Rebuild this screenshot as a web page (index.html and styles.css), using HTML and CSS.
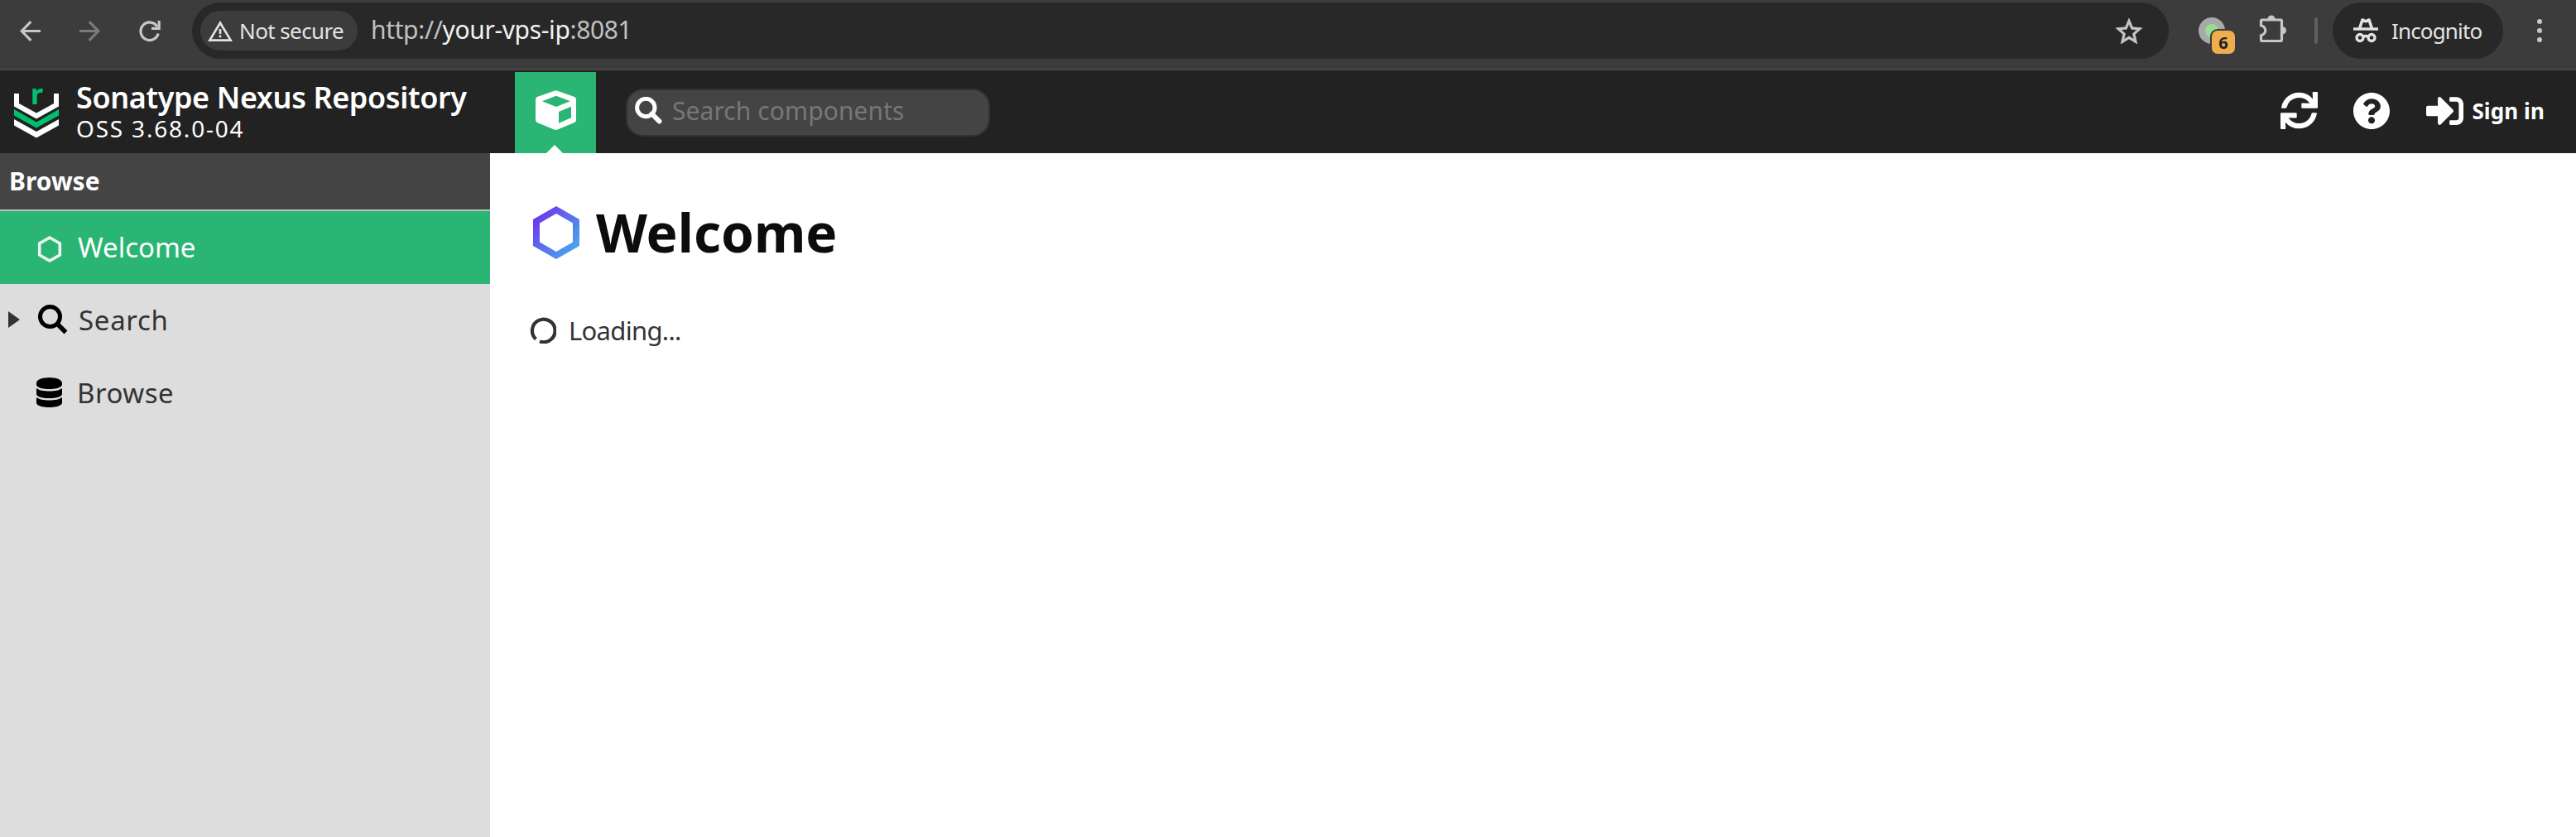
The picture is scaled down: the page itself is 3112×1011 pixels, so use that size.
FILE: index.html
```html
<!DOCTYPE html>
<html lang="en">
<head>
<meta charset="utf-8">
<title>Sonatype Nexus Repository</title>
<link rel="stylesheet" href="styles.css">
</head>
<body>
<div class="browser-bar">
  <nav class="nav-buttons">
    <svg class="nav-icon" width="25" height="25" viewBox="0 0 25 25" fill="none" stroke="#c7c7c7" stroke-width="3.2"><path d="M25 12.500H2.500M13.300 1.200L2.200 12.500l11.100 11.300"/></svg>
    <svg class="nav-icon" width="25" height="25" viewBox="0 0 25 25" fill="none" stroke="#7b7b7b" stroke-width="3.2"><path d="M0 12.500h22.500M11.700 1.200l11.100 11.300-11.100 11.300"/></svg>
    <svg class="nav-icon" width="26" height="26" viewBox="0 0 26 26" fill="none" stroke="#c7c7c7" stroke-width="3.200"><path d="M23.200 15.500A10.800 10.800 0 1 1 22 7.200"/><path d="M24.200 0v9.300H15"/></svg>
  </nav>
  <div class="omnibox">
    <div class="security-chip">
      <svg width="30" height="25" viewBox="0 0 30 25"><path d="M15 0l15 25H0zM15 5.200L4.700 22.200h20.600z" fill="#e3e3e3" fill-rule="evenodd"/><path d="M13.700 10h2.600v6h-2.600zM13.700 17.600h2.600v2.600h-2.600z" fill="#e3e3e3"/></svg>
      <span class="security-text">Not secure</span>
    </div>
    <div class="url">http://<span class="url-host">your-vps-ip</span>:8081</div>
    <svg class="star" width="32" height="31" viewBox="2 2 20 19" preserveAspectRatio="none"><path fill="#c7c7c7" stroke="#c7c7c7" stroke-width=".4" d="M22 9.240l-7.190-.62L12 2 9.190 8.630 2 9.240l5.460 4.730L5.820 21 12 17.270 18.180 21l-1.630-7.030L22 9.240zM12 15.400l-3.760 2.270 1-4.280-3.320-2.880 4.380-.38L12 6.100l1.710 4.040 4.380.38-3.320 2.880 1 4.280L12 15.400z"/></svg>
  </div>
  <div class="extension">
    <span class="extension-badge">6</span>
  </div>
  <svg class="puzzle" width="34" height="34" viewBox="0 0 34 34"><path d="M4 6h22a1.500 1.500 0 0 1 1.500 1.500V30a1.500 1.500 0 0 1-1.500 1.500H4A1.500 1.500 0 0 1 2.500 30v-5.200c7-2.500 7-9.600 0-12V7.500A1.500 1.500 0 0 1 4 6z" fill="none" stroke="#c7c7c7" stroke-width="3.200"/><path d="M10.500 5a4.500 4.500 0 0 1 9 0zM28.500 14.200a4.500 4.500 0 0 1 0 9z" fill="#c7c7c7"/></svg>
  <span class="bar-separator"></span>
  <div class="incognito">
    <svg width="30" height="30" viewBox="0 0 30 30"><path d="M0 11.300h30v3.400H0z" fill="#e3e3e3"/><path d="M7.700 12L11 2l4 1.800L19 2l3.300 10" fill="none" stroke="#e3e3e3" stroke-width="3.600" stroke-linejoin="round"/><g fill="none" stroke="#e3e3e3" stroke-width="3.300"><circle cx="8" cy="23.500" r="4"/><circle cx="22" cy="23.500" r="4"/><path d="M12 22.500q3-2 6 0"/></g></svg>
    <span>Incognito</span>
  </div>
  <svg class="kebab" width="6" height="28" viewBox="0 0 6 28" fill="#c7c7c7"><circle cx="3" cy="3" r="3"/><circle cx="3" cy="14" r="3"/><circle cx="3" cy="25" r="3"/></svg>
</div>

<header class="app-header">
  <div class="brand">
    <svg class="brand-logo" width="54" height="82" viewBox="17 85 54 82"><path d="M17 113h6v12l21 11.500L65 125v-12h6v15.500L44 143.500 17 128.500zM17 144l27 15 27-15v7.500L44 166.500 17 151.500z" fill="#fff"/><path d="M17 132l27 15.500L71 132v7.500L44 154.500 17 139.500z" fill="#00bf6f"/><text class="logo-letter" x="37" y="126">r</text></svg>
    <div class="brand-text">
      <div class="brand-name">Sonatype Nexus Repository</div>
      <div class="brand-version">OSS 3.68.0-04</div>
    </div>
  </div>
  <div class="mode-tab">
    <svg width="49" height="48" viewBox="0 0 49 48"><path fill="#fff" fill-rule="evenodd" d="M22.500.7q2-.9 4 0L47 8q2 .9 2 3.200V36q0 2-2 3L26.500 47.500q-2 .8-4 0L2 39q-2-1-2-3V11.200Q0 8.900 2 8zM7.900 13.300l17 6.700 17-6.700-17-6.600zM28 26v13.700l15-6.400V19.700z"/></svg>
    <svg class="mode-notch" width="20" height="10" viewBox="0 0 20 10"><path d="M10 0l10 10H0z" fill="#fff"/></svg>
  </div>
  <div class="search-box">
    <svg width="33" height="33" viewBox="0 0 33 33" fill="none" stroke="#fff"><circle cx="13.300" cy="13" r="10.700" stroke-width="5"/><path d="M20.500 20.500l9 9" stroke-width="6" stroke-linecap="round"/></svg>
    <span class="search-placeholder">Search components</span>
  </div>
  <div class="header-actions">
    <svg class="refresh" width="45" height="45" viewBox="0 0 512 512" fill="#fff"><path d="M440.650 12.570l4 82.770A247.160 247.160 0 0 0 255.830 8C134.730 8 33.910 94.920 12.290 209.820A12 12 0 0 0 24.090 224h49.050a12 12 0 0 0 11.670-9.260 175.910 175.910 0 0 1 317-56.940l-101.460-4.860a12 12 0 0 0-12.570 12v47.410a12 12 0 0 0 12 12H500a12 12 0 0 0 12-12V12a12 12 0 0 0-12-12h-47.370a12 12 0 0 0-11.980 12.570zM255.830 432a175.610 175.610 0 0 1-146-77.800l101.800 4.870a12 12 0 0 0 12.570-12v-47.400a12 12 0 0 0-12-12H12a12 12 0 0 0-12 12V500a12 12 0 0 0 12 12h47.350a12 12 0 0 0 12-12.600l-4.150-82.570A247.170 247.170 0 0 0 255.830 504c121.110 0 221.930-86.920 243.550-201.820a12 12 0 0 0-11.800-14.180h-49.050a12 12 0 0 0-11.670 9.260A175.860 175.860 0 0 1 255.830 432z"/></svg>
    <svg class="help" width="44" height="44" viewBox="8 8 496 496" fill="#fff"><path d="M504 256c0 136.997-111.043 248-248 248S8 392.997 8 256C8 119.083 119.043 8 256 8s248 111.083 248 248zM262.655 90c-54.497 0-89.255 22.957-116.549 63.758-3.536 5.286-2.353 12.415 2.715 16.258l34.699 26.310c5.205 3.947 12.621 3.008 16.665-2.122 17.864-22.658 30.113-35.797 57.303-35.797 20.429 0 45.698 13.148 45.698 32.958 0 14.976-12.363 22.667-32.534 33.976C247.128 238.528 216 254.941 216 296v4c0 6.627 5.373 12 12 12h56c6.627 0 12-5.373 12-12v-1.333c0-28.462 83.186-29.647 83.186-106.667 0-58.002-60.165-102-116.531-102zM256 338c-25.365 0-46 20.635-46 46 0 25.364 20.635 46 46 46s46-20.636 46-46c0-25.365-20.635-46-46-46z"/></svg>
    <div class="sign-in">
      <svg width="45" height="34" viewBox="0 64 512 384" fill="#fff"><path d="M416 448h-84c-6.600 0-12-5.400-12-12v-40c0-6.600 5.400-12 12-12h84c17.700 0 32-14.300 32-32V160c0-17.700-14.300-32-32-32h-84c-6.600 0-12-5.400-12-12V76c0-6.600 5.400-12 12-12h84c53 0 96 43 96 96v192c0 53-43 96-96 96zm-47-209L201 71c-15-15-41-4.500-41 17v96H24c-13.300 0-24 10.700-24 24v96c0 13.300 10.700 24 24 24h136v96c0 21.500 26 32 41 17l168-168c9.300-9.400 9.300-24.600 0-34z"/></svg>
      <span>Sign in</span>
    </div>
  </div>
</header>

<div class="workspace">
  <aside class="sidebar">
    <div class="sidebar-title">Browse</div>
    <div class="menu-item selected">
      <span class="menu-arrow"></span>
      <span class="menu-icon"><svg class="icon-hex" width="30" height="32" viewBox="0 0 30 32"><path d="M15 2l12.300 7v14L15 30 2.700 23V9z" fill="none" stroke="#fff" stroke-opacity=".9" stroke-width="3.600"/></svg></span>
      <span class="menu-label label-welcome">Welcome</span>
    </div>
    <div class="menu-item">
      <span class="menu-arrow"><svg width="14" height="20" viewBox="0 0 14 20"><path d="M0 0l14 10L0 20z" fill="#333"/></svg></span>
      <span class="menu-icon icon-search"><svg width="36" height="36" viewBox="0 0 36 36" fill="none" stroke="#000"><circle cx="14.500" cy="14.500" r="12" stroke-width="5"/><path d="M23 23l10.500 10.500" stroke-width="5.500"/></svg></span>
      <span class="menu-label label-search">Search</span>
    </div>
    <div class="menu-item">
      <span class="menu-arrow"></span>
      <span class="menu-icon"><svg class="icon-db" width="31" height="36" viewBox="0 0 31 36"><path d="M0 6.500C0 2.800 7 0 15.500 0S31 2.800 31 6.500v2C31 11.800 24 14 15.500 14S0 11.800 0 8.500zM0 13c3 2.500 9 3.500 15.500 3.500S28 15.500 31 13v7c0 3-7 5-15.500 5S0 23 0 20zM0 24c3 2.500 9 3.500 15.500 3.500S28 26.500 31 24v6.500c0 3.300-7 5.500-15.500 5.500S0 33.800 0 30.500z"/></svg></span>
      <span class="menu-label label-browse">Browse</span>
    </div>
  </aside>
  <main class="content">
    <div class="page-heading">
      <svg width="56" height="64" viewBox="0 0 56 64"><defs><linearGradient id="hex" x1="0" y1="0" x2="1" y2="1"><stop offset=".1" stop-color="#6e35ee"/><stop offset=".9" stop-color="#4aa9ea"/></linearGradient></defs><path d="M28 0l28 16v32L28 64 0 48V16zM28 9L8 20.500v23L28 55l20-11.500v-23z" fill="url(#hex)" fill-rule="evenodd"/></svg>
      <h1>Welcome</h1>
    </div>
    <div class="loading">
      <svg width="32" height="32" viewBox="0 0 32 32"><path d="M7.400 26.600A13.800 13.800 0 1 1 12 29.400" fill="none" stroke="#333" stroke-width="4.200"/></svg>
      <span>Loading...</span>
    </div>
  </main>
</div>
</body>
</html>
```
FILE: styles.css
```css
* { box-sizing: border-box; }
body {
  margin: 0;
  height: 1011px;
  display: flex;
  flex-direction: column;
  overflow: hidden;
  background: #fff;
  font-family: "Noto Sans", "Open Sans", sans-serif;
  white-space: nowrap;
}
svg { display: block; flex: none; }

/* Browser toolbar */
.browser-bar {
  height: 85px;
  flex: none;
  display: flex;
  align-items: flex-start;
  padding: 3px 41px 0 24px;
  background: #3c3c3c;
  border-bottom: 2px solid #474747;
}
.nav-buttons { display: flex; gap: 47px; width: 208px; padding-top: 22px; }
.omnibox {
  width: 2388px;
  height: 68px;
  display: flex;
  align-items: center;
  padding: 0 32px 0 10px;
  border-radius: 34px;
  background: #282828;
}
.security-chip {
  width: 190px;
  height: 48px;
  display: flex;
  align-items: center;
  gap: 8px;
  padding-left: 9px;
  border-radius: 24px;
  background: #3c3c3c;
  color: #e3e3e3;
  font-size: 26px;
}
.security-text { letter-spacing: -.6px; }
.url {
  margin-left: 16px;
  padding-bottom: 3px;
  color: #c0c0c0;
  font-size: 30px;
  letter-spacing: -.36px;
}
.url-host { color: #f1f1f1; }
.star { margin-left: auto; }
.extension {
  position: relative;
  width: 32px;
  height: 32px;
  margin: 18px 0 0 36px;
  border-radius: 50%;
  background: radial-gradient(circle, #98dc98 7.500px, #a9a9a9 8.500px);
}
.extension-badge {
  position: absolute;
  left: 16px;
  top: 16px;
  width: 28px;
  height: 28px;
  border-radius: 7px;
  box-shadow: 0 0 0 2px #3c3c3c;
  background: #f0ad4e;
  color: #222;
  font-size: 20px;
  font-weight: 700;
  line-height: 29px;
  text-align: center;
}
.puzzle { margin: 15px 0 0 41px; }
.bar-separator {
  width: 4px;
  height: 32px;
  margin: 18px 18px 0 33px;
  border-radius: 2px;
  background: #5f5f5f;
}
.incognito {
  width: 206px;
  height: 68px;
  display: flex;
  align-items: center;
  gap: 16px;
  padding-left: 25px;
  border-radius: 34px;
  background: #282828;
  color: #e3e3e3;
  font-size: 26px;
  letter-spacing: -.85px;
}
.kebab { margin: 20px 0 0 auto; }

/* Application header */
.app-header {
  height: 100px;
  flex: none;
  display: flex;
  align-items: flex-start;
  background: #222;
  color: #fff;
}
.brand { width: 622px; display: flex; padding-left: 17px; }
.logo-letter { font-size: 34px; font-weight: 700; fill: #00bf6f; }
.brand-text { padding: 15px 0 0 21px; }
.brand-name { font-size: 36px; font-weight: 600; line-height: 36px; letter-spacing: -.4px; }
.brand-version { margin-top: 3px; font-size: 28px; line-height: 32px; letter-spacing: 1.800px; }
.mode-tab {
  width: 98px;
  height: 98px;
  margin-top: 2px;
  display: flex;
  flex-direction: column;
  align-items: center;
  justify-content: space-between;
  padding-top: 22px;
  background: #2ab574;
}
.mode-notch { margin-right: 2px; }
.search-box {
  width: 440px;
  height: 58px;
  margin: 22px 0 0 36px;
  display: flex;
  align-items: flex-start;
  gap: 12px;
  padding: 8px 0 0 9px;
  border: 2px solid #333;
  border-radius: 21px;
  background: #444;
}
.search-placeholder {
  color: #777;
  font-size: 30px;
  line-height: 34px;
  letter-spacing: .08px;
}
.header-actions { margin-left: auto; display: flex; align-items: center; height: 97px; padding-right: 38px; }
.help { margin: 0 44px 0 43px; }
.sign-in {
  display: flex;
  align-items: center;
  gap: 10px;
  font-size: 26px;
  font-weight: 700;
  letter-spacing: .1px;
}

/* Body: sidebar and content */
.workspace { flex: 1; display: flex; }
.sidebar { width: 592px; background: #ddd; color: #333; }
.sidebar-title {
  height: 70px;
  padding-left: 11px;
  border-bottom: 2px solid #bfbfbf;
  background: #444;
  color: #fff;
  font-size: 30px;
  font-weight: 700;
  line-height: 67px;
}
.menu-item { height: 88px; display: flex; align-items: center; padding: 0 0 2px 10px; font-size: 33px; }
.menu-item.selected { background: #2ab574; color: #fff; }
.menu-arrow { width: 34px; }
.menu-icon { width: 51px; }
.icon-search { padding-left: 2px; }
.menu-item.selected .menu-icon { padding: 6px 0 0 1px; }
.label-welcome { margin-left: -1px; }
.label-search { letter-spacing: .7px; }
.label-browse { margin-left: -2px; letter-spacing: .5px; }
.content { flex: 1; padding: 56px 0 0 48px; }
.page-heading { display: flex; align-items: center; gap: 20px; padding-left: 4px; height: 80px; }
h1 { margin: 0; color: #0c0c0c; font-size: 64px; font-weight: 700; line-height: 80px; }
.loading {
  display: flex;
  align-items: center;
  gap: 15px;
  height: 40px;
  margin-top: 58px;
  color: #333;
  font-size: 31px;
  letter-spacing: -.7px;
}
```
